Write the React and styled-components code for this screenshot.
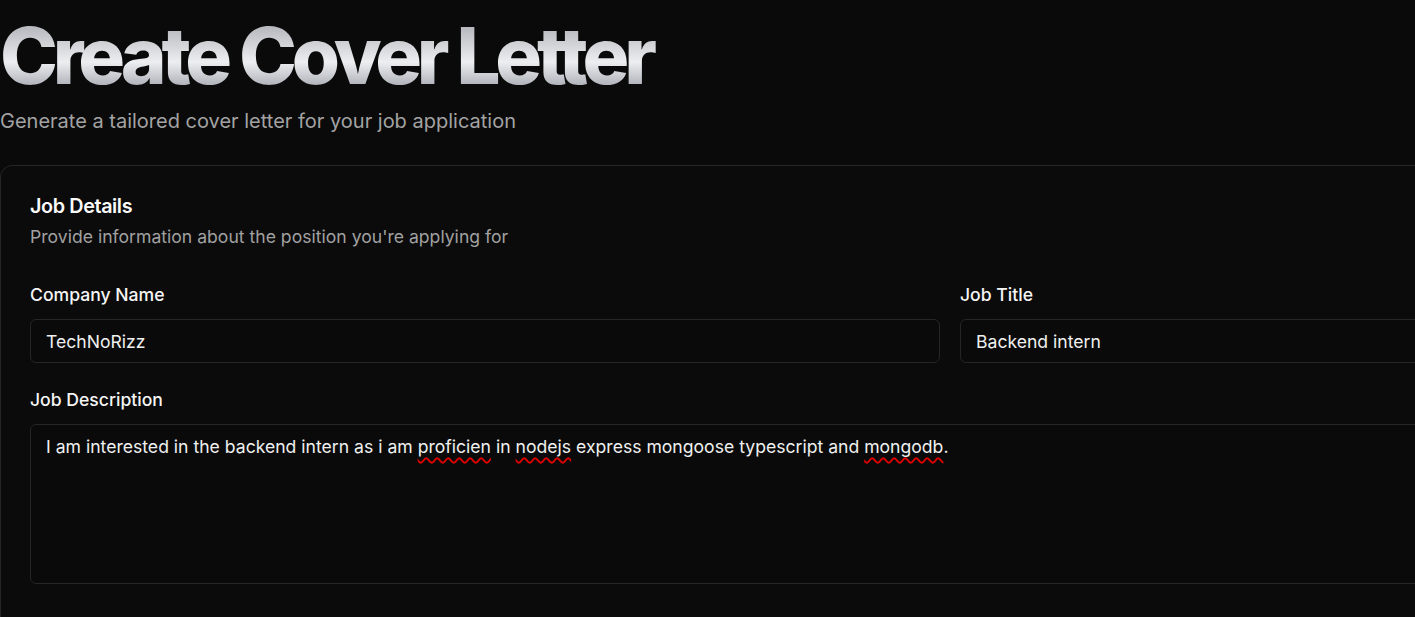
import styled, { createGlobalStyle } from "styled-components";

const GlobalStyle = createGlobalStyle`
  html, body {
    margin: 0;
    padding: 0;
    background: #0a0a0a;
    overflow: hidden;
  }
  body {
    font-family: Inter, "Noto Sans", sans-serif;
    color: #fafafa;
  }
`;

function App() {
  return (
    <>
      <GlobalStyle />
      <Page>
        <Header>
          <Title>Create Cover Letter</Title>
          <Subtitle>Generate a tailored cover letter for your job application</Subtitle>
        </Header>
        <Card>
          <CardHeader>
            <CardTitle>Job Details</CardTitle>
            <CardDescription>
              Provide information about the position you're applying for
            </CardDescription>
          </CardHeader>
          <Row>
            <Field>
              <Label>Company Name</Label>
              <Input defaultValue="TechNoRizz" spellCheck={false} />
            </Field>
            <Field>
              <Label>Job Title</Label>
              <Input defaultValue="Backend intern" spellCheck={false} />
            </Field>
          </Row>
          <Field>
            <Label>Job Description</Label>
            <TextArea>
              I am interested in the backend intern as i am <Typo>proficien</Typo> in{" "}
              <Typo>nodejs</Typo> express mongoose typescript and <Typo>mongodb</Typo>.
            </TextArea>
          </Field>
        </Card>
      </Page>
    </>
  );
}

export default App;

const Page = styled.div`
  width: 1900px;
  padding-top: 17px;
`;

const Header = styled.div`
  margin-bottom: 30px;
`;

const Title = styled.h1`
  margin: 0;
  font-size: 78px;
  line-height: 1;
  font-weight: 800;
  letter-spacing: -0.066em;
  background: linear-gradient(
    to bottom,
    #a7aab0 0%,
    #d3d5d9 35%,
    #eceef0 55%,
    #b7bac0 80%,
    #8c9097 100%
  );
  -webkit-background-clip: text;
  background-clip: text;
  color: transparent;
  display: inline-block;
  padding: 0 6px 4px 0;
`;

const Subtitle = styled.p`
  margin: 8px 0 0;
  font-size: 20px;
  line-height: 28px;
  color: #a3a3a3;
`;

const Card = styled.div`
  border: 1px solid #262626;
  border-radius: 12px;
  background: #0b0b0b;
  padding: 28px 29px 60px;
  display: flex;
  flex-direction: column;
  gap: 26px;
`;

const CardHeader = styled.div`
  display: flex;
  flex-direction: column;
  gap: 7px;
  margin-bottom: 9px;
`;

const CardTitle = styled.h2`
  margin: 0;
  font-size: 19.8px;
  line-height: 24px;
  font-weight: 600;
  letter-spacing: -0.02em;
  color: #fafafa;
`;

const CardDescription = styled.p`
  margin: 0;
  font-size: 17.6px;
  line-height: 24px;
  color: #a1a1a1;
`;

const Row = styled.div`
  display: grid;
  grid-template-columns: 1fr 1fr;
  gap: 20px;
`;

const Field = styled.div`
  display: flex;
  flex-direction: column;
  gap: 13px;
`;

const Label = styled.label`
  font-size: 17.6px;
  font-weight: 500;
  color: #f5f5f5;
  line-height: 22px;
`;

const Input = styled.input`
  box-sizing: border-box;
  height: 44px;
  width: 100%;
  padding: 0 15px;
  border: 1px solid #262626;
  border-radius: 6px;
  background: #0a0a0a;
  color: #f0f0f0;
  font-family: Inter, sans-serif;
  font-size: 17.6px;
  outline: none;
`;

const TextArea = styled.div`
  box-sizing: border-box;
  height: 160px;
  padding: 10px 15px;
  border: 1px solid #262626;
  border-radius: 6px;
  background: #0a0a0a;
  color: #f0f0f0;
  font-size: 17.6px;
  line-height: 24px;
`;

const Typo = styled.span`
  text-decoration: underline wavy #e00000;
  text-decoration-thickness: 1.5px;
  text-underline-offset: 4px;
`;
